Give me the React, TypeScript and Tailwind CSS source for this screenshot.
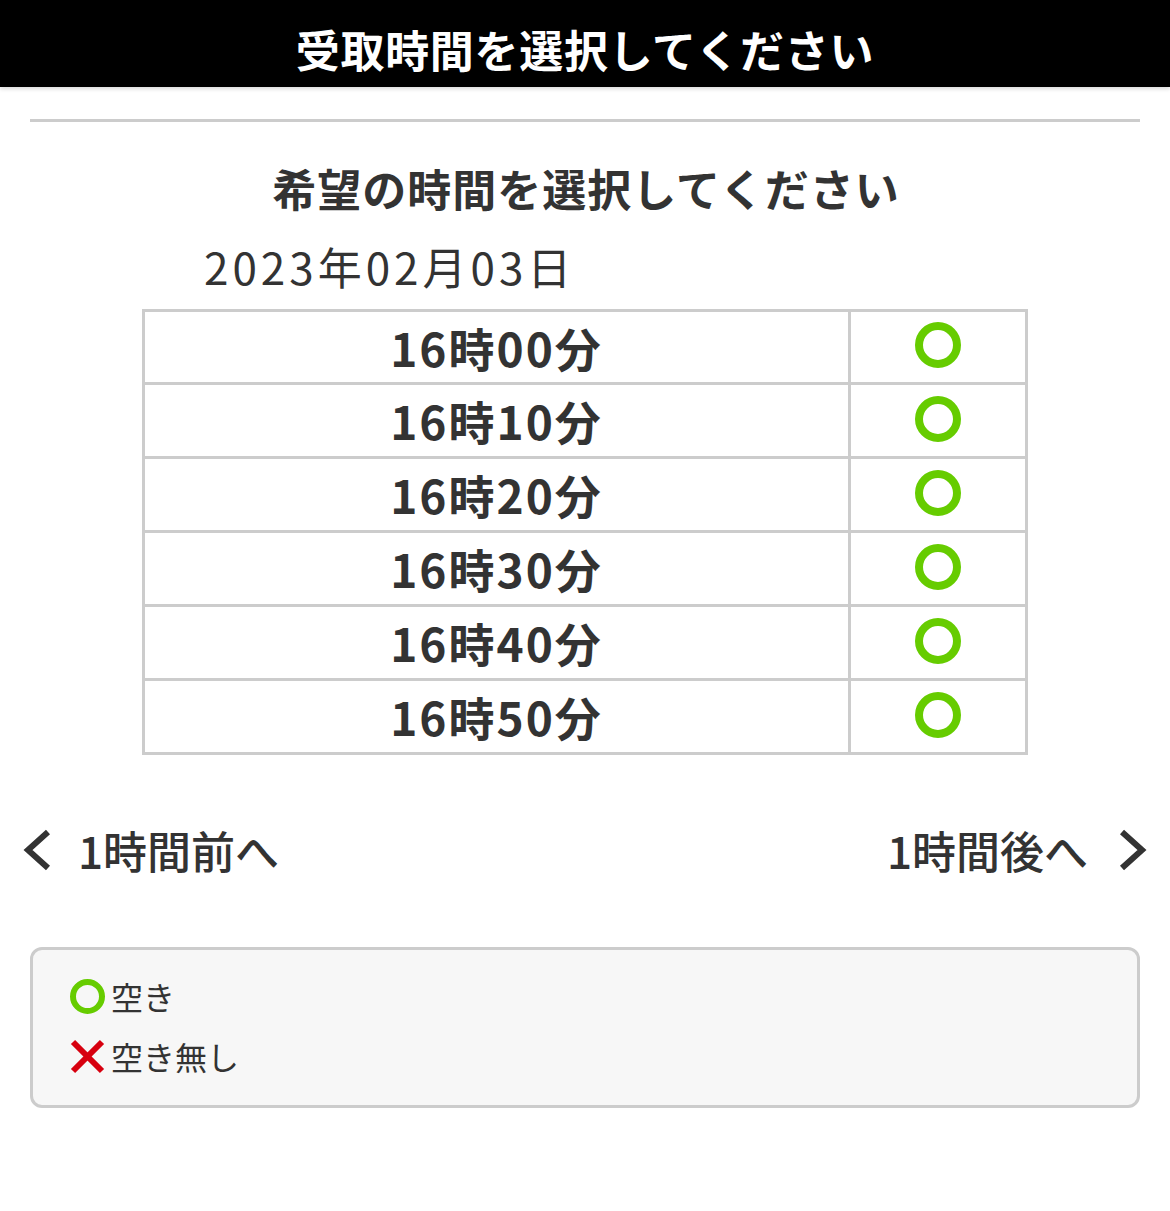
import React from "react";

const font = { fontFamily: '"Noto Sans CJK JP", "Noto Sans", sans-serif' };

function Circle({ size, stroke }: { size: number; stroke: number }) {
  const r = (size - stroke) / 2;
  return (
    <svg width={size} height={size} viewBox={`0 0 ${size} ${size}`}>
      <circle cx={size / 2} cy={size / 2} r={r} fill="none" stroke="#66cc00" strokeWidth={stroke} />
    </svg>
  );
}

const times = ["16時00分", "16時10分", "16時20分", "16時30分", "16時40分", "16時50分"];

export default function App() {
  return (
    <div className="w-[1170px] h-[1211px] bg-white text-[#333]" style={font}>
      <div className="h-[87px] bg-black flex items-center justify-center pt-[10px] text-white text-[44px] font-bold tracking-[0.7px] shadow-[0_2px_4px_rgba(0,0,0,0.15)]">
        受取時間を選択してください
      </div>
      <div className="px-[30px] pt-[32px]">
        <div className="h-[3px] bg-[#cccccc]" />
      </div>
      <div className="flex justify-center mt-[44px] text-[44px] font-bold leading-none tracking-[1px] pl-[2px]">
        希望の時間を選択してください
      </div>
      <div className="pl-[204px] mt-[34px] text-[44px] leading-none tracking-[4px]">2023年02月03日</div>
      <div className="mx-[142px] mt-[21px] w-[886px] border-[3px] border-[#cccccc]">
        {times.map((t, i) => (
          <div
            key={t}
            className={i === 0 ? "flex h-[70px]" : "flex h-[74px] border-t-[3px] border-[#cccccc]"}
          >
            <div className="w-[706px] border-r-[3px] border-[#cccccc] flex items-center justify-center text-[46px] font-bold tracking-[2px]">
              {t}
            </div>
            <div className="flex-1 flex items-center justify-center pb-[4px]">
              <Circle size={46} stroke={8} />
            </div>
          </div>
        ))}
      </div>
      <div className="flex justify-between items-center mt-[62px] px-[22px] text-[44px] font-medium">
        <div className="flex items-center">
          <svg width="30" height="42" viewBox="0 0 30 42">
            <polyline points="26,3 6,21 26,39" fill="none" stroke="#333" strokeWidth="6" strokeLinejoin="miter" />
          </svg>
          <span className="ml-[26px]">1時間前へ</span>
        </div>
        <div className="flex items-center">
          <span className="mr-[30px]">1時間後へ</span>
          <svg width="30" height="42" viewBox="0 0 30 42">
            <polyline points="4,3 24,21 4,39" fill="none" stroke="#333" strokeWidth="6" strokeLinejoin="miter" />
          </svg>
        </div>
      </div>
      <div className="mx-[30px] mt-[64px] h-[161px] border-[3px] border-[#cccccc] rounded-[12px] bg-[#f7f7f7] pl-[37px] pt-[26px] text-[32px]">
        <div className="flex items-center gap-[6px] h-[40px]">
          <Circle size={35} stroke={6} />
          <span>空き</span>
        </div>
        <div className="flex items-center gap-[6px] h-[40px] mt-[20px]">
          <svg width="35" height="35" viewBox="0 0 35 35">
            <line x1="3" y1="3" x2="32" y2="32" stroke="#d7000f" strokeWidth="6" />
            <line x1="32" y1="3" x2="3" y2="32" stroke="#d7000f" strokeWidth="6" />
          </svg>
          <span>空き無し</span>
        </div>
      </div>
    </div>
  );
}
